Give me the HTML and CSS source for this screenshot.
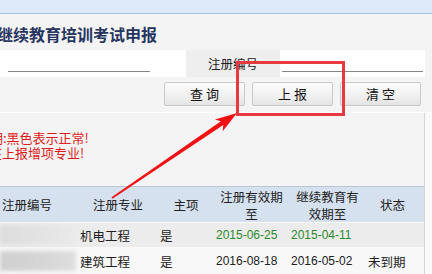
FILE: index.html
```html
<!DOCTYPE html>
<html>
<head lang="zh">
    <meta charset="UTF-8">
    <title>继续教育培训考试申报</title>
    <link rel="stylesheet" href="styles.css">
</head>
<body>
<div class="topbar"></div>
<div class="upper">
    <p class="title">继续教育培训考试申报</p>
    <div class="form-row">
        <div class="field first"><div class="line"></div></div>
        <div class="label">注册编号</div>
        <div class="field last"><div class="line"></div></div>
    </div>
    <div class="buttons">
        <a href="#" class="btn">查 询</a>
        <a href="#" class="btn">上 报</a>
        <a href="#" class="btn">清 空</a>
    </div>
</div>
<div class="lower">
    <div class="notes">
        <p class="note one">期:黑色表示正常!</p>
        <p class="note two">在上报增项专业!</p>
    </div>
    <div class="grid head">
        <div class="c first">注册编号</div>
        <div class="c">注册专业</div>
        <div class="c">主项</div>
        <div class="c">注册有效期<br>至</div>
        <div class="c">继续教育有<br>效期至</div>
        <div class="c last">状态</div>
    </div>
    <div class="grid row odd">
        <div class="c"><div class="smudge light"></div></div>
        <div class="c">机电工程</div>
        <div class="c">是</div>
        <div class="c date green">2015-06-25</div>
        <div class="c date green">2015-04-11</div>
        <div class="c"></div>
    </div>
    <div class="grid row even">
        <div class="c"><div class="smudge dark"></div></div>
        <div class="c">建筑工程</div>
        <div class="c">是</div>
        <div class="c date">2016-08-18</div>
        <div class="c date">2016-05-02</div>
        <div class="c">未到期</div>
    </div>
</div>
<svg class="marks" width="432" height="274" viewBox="0 0 432 274">
    <rect x="237.5" y="62.5" width="106" height="52" fill="none" stroke="#e63a40" stroke-width="3"/>
    <polygon fill="#f01212" points="111.55,197.34 220.9,121.3 214.9,119.6 237,113 222.7,131.2 223.3,124.9 112.45,198.66"/>
</svg>
</body>
</html>
```

FILE: styles.css
```css
body {
    margin: 0px;
    width: 432px;
    height: 274px;
    overflow: hidden;
    position: relative;
    background: #fafafa;
    font-family: "Noto Sans CJK SC", sans-serif;
    color: #222;
}
.topbar {
    height: 13px;
    background: #dde9f8;
    border-bottom: 1px solid #a9bfdc;
}
.upper {
    background: #f4f4f4;
    padding-bottom: 6px;
    border-bottom: 1px solid #ffffff;
}
.title {
    margin: 0px 0px 0px -3px;
    padding-top: 10px;
    height: 20px;
    line-height: 20px;
    font-size: 16px;
    font-weight: bold;
    color: #26355f;
}
.form-row {
    display: flex;
    margin-top: 6px;
    height: 27px;
}
.field {
    background: #ffffff;
}
.field.first {
    width: 186px;
}
.field.last {
    width: 145px;
}
.field .line {
    height: 21px;
    border-bottom: 1px solid #858585;
}
.field.first .line {
    margin-left: 8px;
    width: 142px;
}
.field.last .line {
    margin-left: 2px;
    width: 141px;
}
.label {
    width: 94px;
    background: #eeeeee;
    text-align: center;
    font-size: 12.5px;
    line-height: 27px;
}
.buttons {
    display: flex;
    justify-content: flex-end;
    gap: 7px;
    padding-right: 11px;
    margin-top: 5px;
}
.btn {
    width: 79px;
    height: 22px;
    line-height: 22px;
    text-align: center;
    border: 1px solid #c9c9c9;
    border-radius: 2px;
    background: linear-gradient(to bottom, #fdfdfd 0%, #f0f0f0 60%, #e4e4e4 100%);
    color: #111;
    font-size: 13px;
    text-decoration: none;
    white-space: pre;
}
.lower {
    width: 424px;
    height: 161px;
    background: #f4f4f4;
    border-right: 1px solid #d6d6d6;
}
.notes {
    padding-top: 17px;
    height: 56px;
}
.note {
    margin: 0px;
    font-size: 13px;
    line-height: 15px;
    color: #e01b1b;
    white-space: nowrap;
}
.note.one {
    margin-left: -10px;
}
.note.two {
    margin-left: -11px;
}
.grid {
    display: grid;
    grid-template-columns: 78px 80px 56px 75px 77px 58px;
    font-size: 12.5px;
}
.head {
    height: 35px;
    border-top: 1px solid #b9c6d6;
    background: #d5e1ef;
    align-items: center;
    text-align: center;
    line-height: 17px;
}
.head .c.first {
    text-align: left;
    padding-left: 2px;
}
.head .c.last {
    padding-right: 5px;
}
.row {
    align-items: center;
    border-top: 1px solid #fbfbfb;
}
.row.odd {
    height: 24px;
    background: #ececec;
}
.row.even {
    height: 26px;
    background: #f8f8f8;
}
.row .c {
    padding-left: 2px;
    white-space: nowrap;
}
.row .date {
    font-family: "Liberation Sans", sans-serif;
    font-size: 12px;
}
.green {
    color: #2b8a2b;
}
.smudge {
    height: 20px;
    margin-left: -2px;
    width: 76px;
    filter: blur(2px);
}
.smudge.light {
    background: linear-gradient(to right, #dcdcdc, #e4e4e4 60%, #eaeaea);
}
.smudge.dark {
    background: linear-gradient(to right, #cfcfcf, #d6d6d6 60%, #dedede);
}
.marks {
    position: absolute;
    left: 0px;
    top: 0px;
    pointer-events: none;
}
```
